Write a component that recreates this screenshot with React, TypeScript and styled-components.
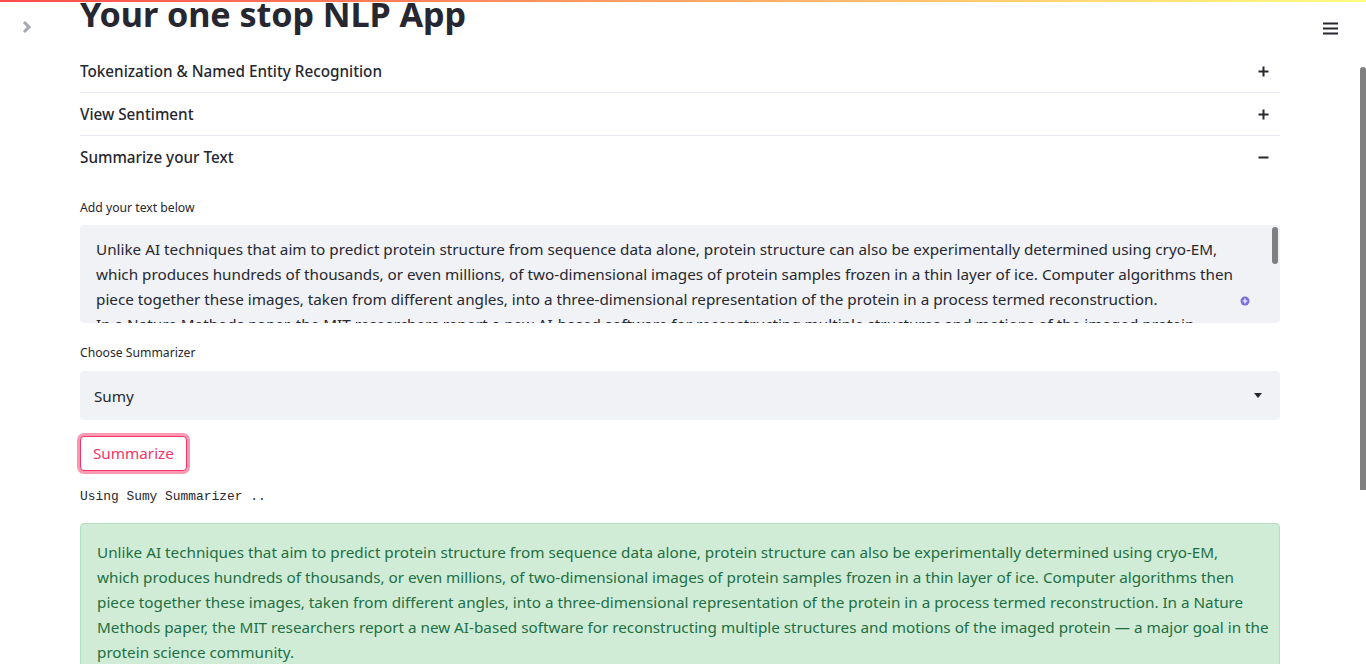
import React, { useLayoutEffect, useRef } from "react";
import styled, { createGlobalStyle } from "styled-components";

const GlobalStyle = createGlobalStyle`
  html, body { margin: 0; padding: 0; height: 100%; overflow: hidden; background: #ffffff; }
  body { font-family: "Noto Sans", "Open Sans", sans-serif; color: #262730; }
  * { box-sizing: border-box; }
`;

const Decoration = styled.div`
  position: fixed;
  top: 0;
  left: 0;
  right: 0;
  height: 2px;
  background: linear-gradient(90deg, rgb(255, 75, 75), rgb(255, 253, 128));
  z-index: 10;
`;

const SidebarToggle = styled.button`
  position: fixed;
  top: 18px;
  left: 18px;
  width: 18px;
  height: 18px;
  padding: 0;
  border: 0;
  background: transparent;
  display: flex;
  align-items: center;
  justify-content: center;
  z-index: 10;
`;

const MenuButton = styled.button`
  position: fixed;
  top: 19px;
  right: 26px;
  width: 20px;
  height: 18px;
  padding: 0;
  border: 0;
  background: transparent;
  display: flex;
  align-items: center;
  justify-content: center;
  z-index: 10;
`;

const PageThumb = styled.div`
  position: fixed;
  top: 67px;
  right: 0;
  width: 6px;
  height: 423px;
  background: #808080;
  border-radius: 3px 3px 0 0;
  z-index: 10;
`;

const Main = styled.main`
  height: 100vh;
  overflow-y: auto;
  overflow-x: hidden;
`;

const Block = styled.div`
  display: flex;
  flex-direction: column;
  padding: 97px 86px 255px 80px;
`;

const Title = styled.h1`
  margin: 0 0 15px;
  font-size: 34.2px;
  line-height: 43px;
  font-weight: 700;
  color: #262730;
  letter-spacing: -0.1px;
`;

const Expander = styled.section`
  border-bottom: 1px solid #e6e9ef;
`;

const ExpanderHeader = styled.div`
  height: 42px;
  display: flex;
  align-items: center;
  justify-content: space-between;
  font-size: 15.25px;
  font-weight: 500;
  color: #262730;
  padding-right: 11px;
`;

const ExpanderBody = styled.div`
  display: flex;
  flex-direction: column;
  padding-top: 20px;
`;

const Field = styled.div<{ $gap: number }>`
  display: flex;
  flex-direction: column;
  margin-bottom: ${(p) => p.$gap}px;
`;

const Label = styled.label<{ $space: number }>`
  font-size: 12.2px;
  line-height: 20px;
  margin-bottom: ${(p) => p.$space}px;
  color: #262730;
`;

const TextAreaWrap = styled.div`
  position: relative;
`;

const TextArea = styled.textarea`
  display: block;
  width: 100%;
  height: 98px;
  resize: none;
  border: 0;
  border-radius: 4px;
  background: #f0f2f6;
  padding: 12px 16px;
  font-family: inherit;
  font-size: 15.25px;
  line-height: 25px;
  color: #262730;
  white-space: pre;
  overflow: hidden;
  outline: none;
`;

const AreaThumb = styled.span`
  position: absolute;
  top: 2px;
  right: 2px;
  width: 6px;
  height: 37px;
  border-radius: 3px;
  background: #7f7f7f;
`;

const Grammar = styled.span`
  position: absolute;
  right: 30px;
  top: 71px;
  width: 10px;
  height: 10px;
  display: flex;
`;

const Select = styled.div`
  height: 49px;
  border-radius: 4px;
  background: #f0f2f6;
  display: flex;
  align-items: center;
  justify-content: space-between;
  padding: 0 18px 0 14px;
  font-size: 15.25px;
  color: #262730;
`;

const Button = styled.button`
  align-self: flex-start;
  margin-bottom: 16px;
  height: 35px;
  padding: 0 12px;
  border: 1px solid #f63366;
  border-radius: 4px;
  background: #ffffff;
  color: #f63366;
  font-family: inherit;
  font-size: 15.25px;
  line-height: 25px;
  box-shadow: 0 0 0 3px rgba(246, 51, 102, 0.5);
`;

const Mono = styled.pre`
  margin: 0 0 16px;
  font-family: "Liberation Mono", "DejaVu Sans Mono", monospace;
  font-size: 12.9px;
  line-height: 20px;
  color: #262730;
`;

const Success = styled.div`
  border: 1px solid #b3e1c1;
  border-radius: 4px;
  background: #d0ecd7;
  color: #1d6f42;
  padding: 16px;
  font-size: 15.25px;
  line-height: 25px;
`;

const Line = styled.div`
  white-space: nowrap;
`;

const inputLines = [
  "Unlike AI techniques that aim to predict protein structure from sequence data alone, protein structure can also be experimentally determined using cryo-EM,",
  "which produces hundreds of thousands, or even millions, of two-dimensional images of protein samples frozen in a thin layer of ice. Computer algorithms then",
  "piece together these images, taken from different angles, into a three-dimensional representation of the protein in a process termed reconstruction.",
  "In a Nature Methods paper, the MIT researchers report a new AI-based software for reconstructing multiple structures and motions of the imaged protein",
  "— a major goal in the protein science community.",
  "Instead of using the traditional representation of protein structure as electron-scattering intensities on a 3D lattice, which is impractical for modeling",
  "multiple structures, the researchers introduced a new neural network architecture that can efficiently generate the full ensemble of structures in a single",
  "model.",
  "",
];

const summaryLines = [
  "Unlike AI techniques that aim to predict protein structure from sequence data alone, protein structure can also be experimentally determined using cryo-EM,",
  "which produces hundreds of thousands, or even millions, of two-dimensional images of protein samples frozen in a thin layer of ice. Computer algorithms then",
  "piece together these images, taken from different angles, into a three-dimensional representation of the protein in a process termed reconstruction. In a Nature",
  "Methods paper, the MIT researchers report a new AI-based software for reconstructing multiple structures and motions of the imaged protein — a major goal in the",
  "protein science community.",
];

const PlusIcon = () => (
  <svg width="11" height="11" viewBox="0 0 11 11">
    <path d="M5.5 0.5v10M0.5 5.5h10" stroke="#262730" strokeWidth="2" />
  </svg>
);

const MinusIcon = () => (
  <svg width="11" height="11" viewBox="0 0 11 11">
    <path d="M0.5 5.5h10" stroke="#262730" strokeWidth="2" />
  </svg>
);

const sections = [
  { title: "Tokenization & Named Entity Recognition", open: false },
  { title: "View Sentiment", open: false },
  { title: "Summarize your Text", open: true },
];

export default function App() {
  const mainRef = useRef<HTMLElement>(null);
  useLayoutEffect(() => {
    if (mainRef.current) mainRef.current.scrollTop = 105;
  }, []);

  return (
    <>
      <GlobalStyle />
      <Decoration />
      <SidebarToggle aria-label="Open sidebar">
        <svg width="10" height="14" viewBox="0 0 10 14">
          <path d="M2 2l5 5-5 5" fill="none" stroke="#a3a8b4" strokeWidth="3" />
        </svg>
      </SidebarToggle>
      <MenuButton aria-label="Menu">
        <svg width="15" height="13" viewBox="0 0 15 13">
          <path d="M0 1.5h15M0 6.5h15M0 11.5h15" stroke="#262730" strokeWidth="2" />
        </svg>
      </MenuButton>
      <PageThumb />
      <Main ref={mainRef}>
        <Block>
          <Title>Your one stop NLP App</Title>
          {sections.map((s) => (
            <Expander key={s.title}>
              <ExpanderHeader>
                <span>{s.title}</span>
                {s.open ? <MinusIcon /> : <PlusIcon />}
              </ExpanderHeader>
              {s.open && (
                <ExpanderBody>
                  <Field $gap={20}>
                    <Label $space={7}>Add your text below</Label>
                    <TextAreaWrap>
                      <TextArea readOnly wrap="off" value={inputLines.join("\n")} />
                      <AreaThumb />
                      <Grammar>
                        <svg width="10" height="10" viewBox="0 0 10 10">
                          <circle cx="5" cy="5" r="4.5" fill="#7a6fe0" />
                          <path d="M5 2.6v4.8M2.6 5h4.8" stroke="#ffffff" strokeWidth="1.2" />
                        </svg>
                      </Grammar>
                    </TextAreaWrap>
                  </Field>
                  <Field $gap={16}>
                    <Label $space={8}>Choose Summarizer</Label>
                    <Select>
                      <span>Sumy</span>
                      <svg width="8" height="5" viewBox="0 0 8 5">
                        <path d="M0 0h8L4 5z" fill="#262730" />
                      </svg>
                    </Select>
                  </Field>
                  <Button>Summarize</Button>
                  <Mono>Using Sumy Summarizer ..</Mono>
                  <Success>
                    {summaryLines.map((l, i) => (
                      <Line key={i}>{l}</Line>
                    ))}
                  </Success>
                </ExpanderBody>
              )}
            </Expander>
          ))}
        </Block>
      </Main>
    </>
  );
}
